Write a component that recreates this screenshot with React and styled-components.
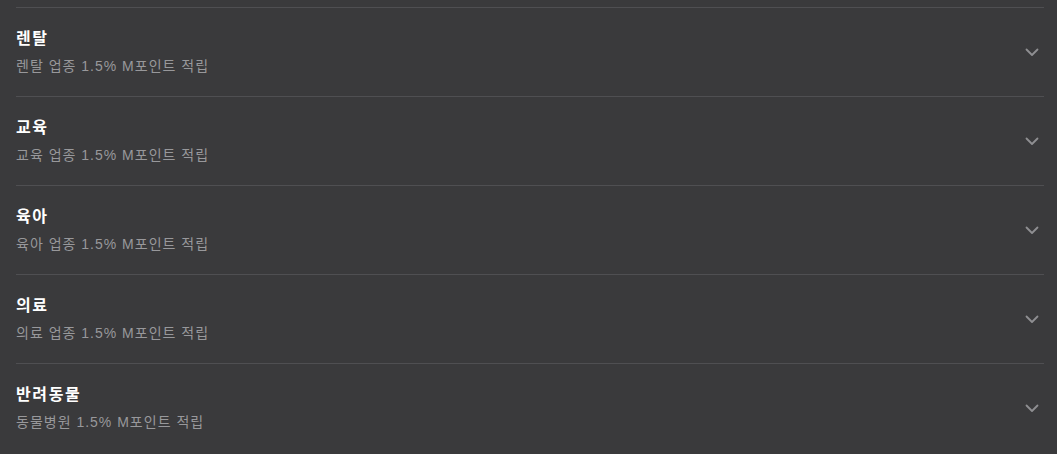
import React from "react";
import styled, { createGlobalStyle } from "styled-components";

const GlobalStyle = createGlobalStyle`
  html, body {
    margin: 0;
    padding: 0;
    background-color: #3a3a3c;
  }
  body {
    font-family: "Liberation Sans", "Noto Sans CJK KR", sans-serif;
  }
`;

const items = [
  { title: "렌탈", desc: "렌탈 업종 1.5% M포인트 적립" },
  { title: "교육", desc: "교육 업종 1.5% M포인트 적립" },
  { title: "육아", desc: "육아 업종 1.5% M포인트 적립" },
  { title: "의료", desc: "의료 업종 1.5% M포인트 적립" },
  { title: "반려동물", desc: "동물병원 1.5% M포인트 적립" },
];

const Chevron = () => (
  <svg width="24" height="24" viewBox="0 0 24 24" fill="none">
    <polyline
      points="6.5 9.5 12 15 17.5 9.5"
      stroke="#8f8f92"
      strokeWidth="1.8"
      strokeLinecap="round"
      strokeLinejoin="round"
    />
  </svg>
);

const App = () => {
  return (
    <>
      <GlobalStyle />
      <List>
        {items.map((item) => (
          <Row key={item.title}>
            <Text>
              <Title>{item.title}</Title>
              <Desc>{item.desc}</Desc>
            </Text>
            <Toggle>
              <Chevron />
            </Toggle>
          </Row>
        ))}
      </List>
    </>
  );
};

const List = styled.div`
  padding: 7px 13px 0 16px;
`;

const Row = styled.div`
  display: flex;
  align-items: center;
  justify-content: space-between;
  border-top: 1px solid #4f4f52;
  padding: 20px 0;
`;

const Text = styled.div`
  display: flex;
  flex-direction: column;
`;

const Title = styled.span`
  font-size: 16px;
  line-height: 22px;
  font-weight: bold;
  letter-spacing: 1.6px;
  color: #ffffff;
`;

const Desc = styled.span`
  margin-top: 6px;
  font-size: 14px;
  line-height: 20px;
  letter-spacing: 1px;
  color: #98989b;
`;

const Toggle = styled.div`
  display: flex;
  width: 24px;
  height: 24px;
`;

export default App;
